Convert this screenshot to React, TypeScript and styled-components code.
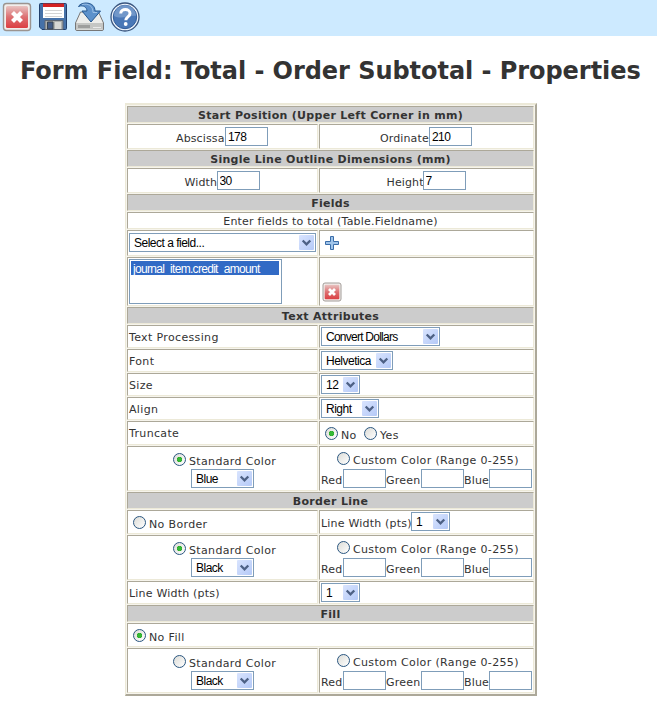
import React from "react";
import styled, { createGlobalStyle, css } from "styled-components";

const GlobalStyle = createGlobalStyle`
  * { box-sizing: border-box; }
  body {
    margin: 0;
    background: #fff;
    color: #333;
    font: 11px/14px "DejaVu Sans", Verdana, sans-serif;
  }
`;

const Page = styled.main`
  width: 657px;
  height: 705px;
  overflow: hidden;
`;

const Toolbar = styled.nav`
  display: flex;
  gap: 6px;
  height: 36px;
  padding: 1px 2px 0;
  background: #cdeaff;
`;

const ToolButton = styled.button`
  display: block;
  width: 30px;
  height: 31px;
  padding: 0;
  border: 0;
  background: none;
  svg { display: block; }
`;

const Title = styled.h1`
  margin: 17px 0 0;
  padding-left: 20px;
  height: 50px;
  font-size: 24px;
  line-height: 36px;
  font-weight: bold;
  white-space: nowrap;
  letter-spacing: -0.05px;
`;

const Sheet = styled.form`
  display: grid;
  grid-template-columns: 191px 215px;
  column-gap: 1px;
  row-gap: 1px;
  width: 412px;
  margin-left: 125px;
  padding: 1px 1px 1px;
  border: solid;
  border-width: 2px 2px 2px 1px;
  border-color: #ece9d8 #aca899 #aca899 #ece9d8;
  background: #f6f4ec;
`;

const Cell = styled.div<{ $h: number; $wide?: boolean; $center?: boolean }>`
  display: flex;
  align-items: flex-start;
  justify-content: ${(p) => (p.$center ? "center" : "flex-start")};
  height: ${(p) => p.$h}px;
  padding: 1px;
  border: 1px solid;
  border-color: #aca899 #ece9d8 #ece9d8 #aca899;
  background: #fff;
  white-space: nowrap;
  ${(p) => p.$wide && css`grid-column: 1 / -1;`}
`;

const HeadCell = styled(Cell)`
  background: #ccc;
  font-weight: bold;
  line-height: 17px;
  letter-spacing: 0.3px;
  padding: 0;
`;

const Stack = styled.div`
  display: flex;
  flex-direction: column;
  align-items: center;
  width: 100%;
`;

const Line = styled.div<{ $top?: number; $left?: number; $right?: number }>`
  display: flex;
  align-items: flex-start;
  margin-top: ${(p) => p.$top ?? 0}px;
  margin-left: ${(p) => p.$left ?? 0}px;
  margin-right: ${(p) => p.$right ?? 0}px;
`;

const Label = styled.span<{ $w?: number; $top?: number; $track?: number }>`
  display: block;
  flex: none;
  width: ${(p) => (p.$w ? `${p.$w}px` : "auto")};
  margin-top: ${(p) => p.$top ?? 0}px;
  letter-spacing: ${(p) => p.$track ?? 0.35}px;
`;

const controlFont = css`
  font: 12px/15px "Liberation Sans", Arial, sans-serif;
  color: #000;
`;

const Field = styled.input`
  ${controlFont}
  flex: none;
  width: 43px;
  height: 19px;
  margin: 0;
  padding: 1px 2px 0;
  border: 1px solid #7f9db9;
  border-radius: 0;
  background: #fff;
  letter-spacing: -0.6px;
`;

const SelectBox = styled.div<{ $w: number; $top?: number }>`
  position: relative;
  flex: none;
  width: ${(p) => p.$w}px;
  height: 19px;
  margin-top: ${(p) => p.$top ?? 0}px;
  svg {
    position: absolute;
    top: 2px;
    right: 2px;
    pointer-events: none;
  }
`;

const NativeSelect = styled.select<{ $track: number }>`
  ${controlFont}
  appearance: none;
  display: block;
  width: 100%;
  height: 19px;
  margin: 0;
  padding: 1px 0 0 4px;
  border: 1px solid #7f9db9;
  border-radius: 0;
  background: #fff;
  letter-spacing: ${(p) => p.$track}px;
`;

const Radio = styled.input.attrs({ type: "radio" })`
  appearance: none;
  flex: none;
  width: 13px;
  height: 13px;
  margin: 0 3px 0 0;
  border: 1px solid #2a5680;
  border-radius: 50%;
  background: linear-gradient(135deg, #dcdcd7, #fff);
  &:checked {
    background: radial-gradient(circle, #35b935 0 2px, #21a121 2.4px, transparent 3px),
      linear-gradient(135deg, #dcdcd7, #fff);
  }
`;

const ListBox = styled.div`
  ${controlFont}
  width: 153px;
  height: 45px;
  padding: 1px;
  border: 1px solid #7f9db9;
`;

const ListItem = styled.div`
  height: 14px;
  width: 148px;
  padding: 1px 0 0 2px;
  line-height: 14px;
  background: #316ac5;
  color: #fff;
  letter-spacing: -0.7px;
`;

const CloseIcon = ({ size }: { size: number }) => (
  <svg width={size} height={size} viewBox="0 0 30 30">
    <defs>
      <linearGradient id="red" x1="0" y1="0" x2="0" y2="1">
        <stop offset="0" stopColor="#e8c4c2" />
        <stop offset="0.5" stopColor="#dd7072" />
        <stop offset="1" stopColor="#dc3f42" />
      </linearGradient>
    </defs>
    <rect x="1.5" y="1.5" width="27" height="27" rx="3" fill="#f2eeec" stroke="#9b9490" strokeWidth="1.4" />
    <rect x="4" y="4" width="22" height="22" rx="1.5" fill="url(#red)" />
    <path d="M10.500 10.500 19.500 19.500M19.500 10.500 10.500 19.500" stroke="#fff" strokeWidth="4.2" />
  </svg>
);

const SaveIcon = () => (
  <svg width="30" height="30" viewBox="0 0 30 30">
    <path d="M2.5 1.5h25a1 1 0 0 1 1 1v24a1 1 0 0 1-1 1H4l-2.500-2.500v-22.500a1 1 0 0 1 1-1z" fill="#4571a8" stroke="#203f6c" />
    <path d="M5 2h21v14H5z" fill="#fff" />
    <path d="M5 1.500h21v3.500H5z" fill="#d52222" />
    <path d="M7 8.500h17M7 11.500h17M7 14.500h17" stroke="#d4d4d4" />
    <path d="M7 18.500h18v9H7z" fill="#adb0ae" stroke="#5c6572" />
    <path d="M9.500 20h5.500v7H9.500z" fill="#405a86" stroke="#384450" />
    <path d="M17 20h6v7h-6z" fill="#d6d7d4" />
  </svg>
);

const DriveIcon = () => (
  <svg width="31" height="30" viewBox="0 0 31 30">
    <path d="M6.500 10h18l5 11v6a1.500 1.500 0 0 1-1.500 1.500H3A1.500 1.500 0 0 1 1.500 27v-6z" fill="#ededeb" stroke="#777" />
    <path d="M2 21h27v6.500H2z" fill="#c5c6c4" />
    <path d="M5 23v3M7 23v3M9 23v3M11 23v3M13 23v3M15 23v3" stroke="#777" />
    <path d="M19 25.500h8" stroke="#e9e9e9" />
    <path d="M4.500 4.500C7-.5 21-1 21 9h5.500L17 20 8 9h5C13 5.500 9.500 2.500 4.500 4.500z" fill="#5d91cb" stroke="#24568f" />
    <path d="M8 2.700C14 1 19 3.500 19 10.500h4" fill="none" stroke="#9bc0e6" />
  </svg>
);

const HelpIcon = () => (
  <svg width="30" height="30" viewBox="0 0 30 30">
    <circle cx="15" cy="15" r="14" fill="#eef4fb" stroke="#39557f" strokeWidth="1.300" />
    <circle cx="15" cy="15" r="11.700" fill="#4a78b7" stroke="#315c99" />
    <path d="M4 14a11 11 0 0 1 22 0c-7-1-14 4-22 0z" fill="#86a8d2" opacity=".65" />
    <path d="M10.700 11.500c.2-5.200 9.300-5.200 9.300 0 0 3.500-4.200 3.300-4.200 6.800" fill="none" stroke="#fff" strokeWidth="3" />
    <circle cx="15.700" cy="22" r="1.900" fill="#fff" />
  </svg>
);

const PlusIcon = () => (
  <svg width="14" height="14" viewBox="0 0 14 14">
    <path d="M5.500.5h3v5h5v3h-5v5h-3v-5h-5v-3h5z" fill="#9fc4ea" stroke="#3a6da9" />
  </svg>
);

const Caret = () => (
  <svg width="15" height="15" viewBox="0 0 15 15">
    <defs>
      <linearGradient id="caret" x1="0" y1="0" x2="1" y2="1">
        <stop offset="0" stopColor="#d9e4fe" />
        <stop offset="1" stopColor="#b4c9f7" />
      </linearGradient>
    </defs>
    <rect width="15" height="15" rx="1" fill="url(#caret)" />
    <path d="M3.700 5.500 7.500 9.300 11.300 5.500" fill="none" stroke="#4d6185" strokeWidth="2.300" />
  </svg>
);

interface DropdownProps {
  value: string;
  w: number;
  top?: number;
  track?: number;
}

const Dropdown = ({ value, w, top, track = -0.5 }: DropdownProps) => (
  <SelectBox $w={w} $top={top}>
    <NativeSelect $track={track} aria-label={value}>
      <option>{value}</option>
    </NativeSelect>
    <Caret />
  </SelectBox>
);

interface MeasureProps {
  label: string;
  value: string;
  w: number;
}

const MeasureCell = ({ label, value, w }: MeasureProps) => (
  <Cell $h={25} $center>
    <Line $top={1} $right={1}>
      <Label $w={w} $top={5} $track={0.12}>{label}</Label>
      <Field defaultValue={value} aria-label={label} />
    </Line>
  </Cell>
);

interface AttributeProps extends MeasureProps {
  track?: number;
  labelTrack?: number;
}

const AttributeRow = ({ label, value, w, track, labelTrack }: AttributeProps) => (
  <>
    <Cell $h={23}><Label $top={4} $track={labelTrack}>{label}</Label></Cell>
    <Cell $h={23}><Dropdown value={value} w={w} track={track} /></Cell>
  </>
);

const ColorRow = ({ group, color, standard }: { group: string; color: string; standard?: boolean }) => (
  <>
    <Cell $h={45}>
      <Stack>
        <Line $top={5} $left={4}>
          <Radio name={group} defaultChecked={standard} />
          <Label $w={87} $top={2}>Standard Color</Label>
        </Line>
        <Line>
          <Dropdown value={color} w={63} />
        </Line>
      </Stack>
    </Cell>
    <Cell $h={45}>
      <Stack>
        <Line $top={4} $left={3}>
          <Radio name={group} />
          <Label $w={166} $top={2}>Custom Color (Range 0-255)</Label>
        </Line>
        <Line $top={1}>
          <Label $w={22} $top={5} $track={0.15}>Red</Label>
          <Field aria-label="Red" />
          <Label $w={35} $top={5} $track={0.25}>Green</Label>
          <Field aria-label="Green" />
          <Label $w={25} $top={5} $track={0.15}>Blue</Label>
          <Field aria-label="Blue" />
        </Line>
      </Stack>
    </Cell>
  </>
);

const Heading = ({ children }: { children: React.ReactNode }) => (
  <HeadCell $h={17} $wide $center>{children}</HeadCell>
);

export default function App() {
  return (
    <Page>
      <GlobalStyle />
      <Toolbar>
        <ToolButton type="button" aria-label="Close"><CloseIcon size={30} /></ToolButton>
        <ToolButton type="button" aria-label="Save"><SaveIcon /></ToolButton>
        <ToolButton type="button" aria-label="Save as"><DriveIcon /></ToolButton>
        <ToolButton type="button" aria-label="Help"><HelpIcon /></ToolButton>
      </Toolbar>
      <Title>Form Field: Total - Order Subtotal - Properties</Title>
      <Sheet>
        <Heading>Start Position (Upper Left Corner in mm)</Heading>
        <MeasureCell label="Abscissa" value="178" w={49} />
        <MeasureCell label="Ordinate" value="210" w={49} />
        <Heading>Single Line Outline Dimensions (mm)</Heading>
        <MeasureCell label="Width" value="30" w={32} />
        <MeasureCell label="Height" value="7" w={36} />
        <Heading>Fields</Heading>
        <Cell $h={17} $wide $center><Label $top={1} $track={0.21}>Enter fields to total (Table.Fieldname)</Label></Cell>
        <Cell $h={26}><Dropdown value="Select a field..." w={187} top={1} /></Cell>
        <Cell $h={26}><Line $top={4} $left={4}><PlusIcon /></Line></Cell>
        <Cell $h={49}>
          <ListBox><ListItem>journal_item.credit_amount</ListItem></ListBox>
        </Cell>
        <Cell $h={49}><Line $top={23} $left={1}><CloseIcon size={20} /></Line></Cell>

        <Heading>Text Attributes</Heading>
        <AttributeRow label="Text Processing" value="Convert Dollars" w={119} track={-0.75} />
        <AttributeRow label="Font" value="Helvetica" w={72} />
        <AttributeRow label="Size" value="12" w={39} track={-0.3} />
        <AttributeRow label="Align" value="Right" w={58} />
        <Cell $h={24}><Label $top={4}>Truncate</Label></Cell>
        <Cell $h={24}>
          <Line $top={4} $left={4}>
            <Radio name="truncate" defaultChecked />
            <Label $w={23} $top={2}>No</Label>
            <Radio name="truncate" />
            <Label $top={2}>Yes</Label>
          </Line>
        </Cell>
        <ColorRow group="text" color="Blue" standard />

        <Heading>Border Line</Heading>
        <Cell $h={24}>
          <Line $top={4} $left={4}>
            <Radio name="no-border" />
            <Label $top={2}>No Border</Label>
          </Line>
        </Cell>
        <Cell $h={24}>
          <Label $w={90} $top={5} $track={0.2}>Line Width (pts)</Label>
          <Dropdown value="1" w={39} />
        </Cell>
        <ColorRow group="border" color="Black" standard />
        <AttributeRow label="Line Width (pts)" value="1" w={39} labelTrack={0.2} />

        <Heading>Fill</Heading>
        <Cell $h={24} $wide>
          <Line $top={4} $left={4}>
            <Radio name="fill" defaultChecked />
            <Label $top={2}>No Fill</Label>
          </Line>
        </Cell>
        <ColorRow group="fill" color="Black" />
      </Sheet>
    </Page>
  );
}
